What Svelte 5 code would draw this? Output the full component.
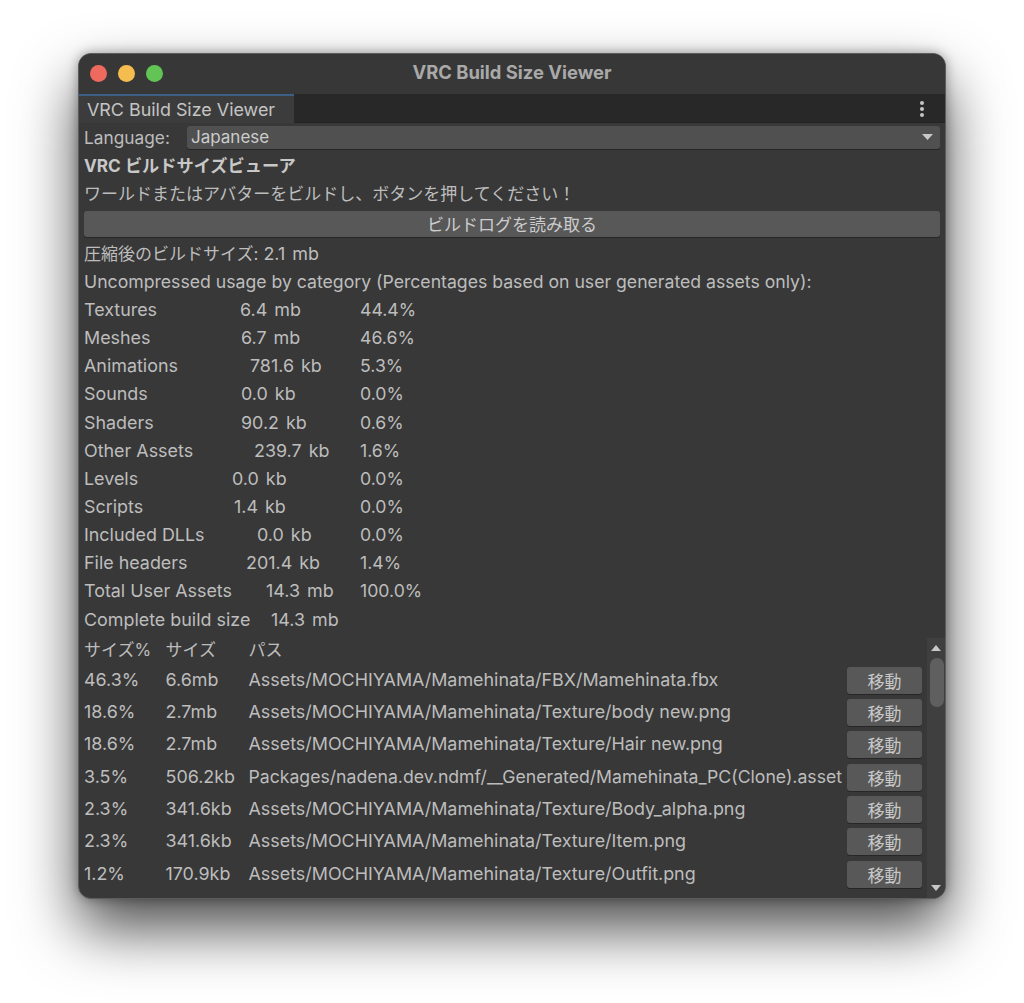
<script>
  const stats = [
    { name: "Textures", size: "6.4 mb", pct: "44.4%", at: 155 },
    { name: "Meshes", size: "6.7 mb", pct: "46.6%", at: 156 },
    { name: "Animations", size: "781.6 kb", pct: "5.3%", at: 165 },
    { name: "Sounds", size: "0.0 kb", pct: "0.0%", at: 156 },
    { name: "Shaders", size: "90.2 kb", pct: "0.6%", at: 156 },
    { name: "Other Assets", size: "239.7 kb", pct: "1.6%", at: 169 },
    { name: "Levels", size: "0.0 kb", pct: "0.0%", at: 147 },
    { name: "Scripts", size: "1.4 kb", pct: "0.0%", at: 149 },
    { name: "Included DLLs", size: "0.0 kb", pct: "0.0%", at: 172 },
    { name: "File headers", size: "201.4 kb", pct: "1.4%", at: 161 },
    { name: "Total User Assets", size: "14.3 mb", pct: "100.0%", at: 181 }
  ];

  const files = [
    ["46.3%", "6.6mb", "Assets/MOCHIYAMA/Mamehinata/FBX/Mamehinata.fbx"],
    ["18.6%", "2.7mb", "Assets/MOCHIYAMA/Mamehinata/Texture/body new.png"],
    ["18.6%", "2.7mb", "Assets/MOCHIYAMA/Mamehinata/Texture/Hair new.png"],
    ["3.5%", "506.2kb", "Packages/nadena.dev.ndmf/__Generated/Mamehinata_PC(Clone).asset"],
    ["2.3%", "341.6kb", "Assets/MOCHIYAMA/Mamehinata/Texture/Body_alpha.png"],
    ["2.3%", "341.6kb", "Assets/MOCHIYAMA/Mamehinata/Texture/Item.png"],
    ["1.2%", "170.9kb", "Assets/MOCHIYAMA/Mamehinata/Texture/Outfit.png"],
    ["0.5%", "74.5kb", "Packages/nadena.dev.ndmf/__Generated/Mamehinata.asset"]
  ];
</script>

<div class="page">
  <div class="window">
    <header class="titlebar">
      <div class="lights">
        <span class="light red"></span>
        <span class="light yellow"></span>
        <span class="light green"></span>
      </div>
      <div class="title">VRC Build Size Viewer</div>
    </header>

    <div class="tabbar">
      <div class="tab">VRC Build Size Viewer</div>
      <div class="kebab"><i></i><i></i><i></i></div>
    </div>

    <div class="content">
      <div class="lang">
        <span class="lang-label">Language:</span>
        <div class="select">
          <span>Japanese</span>
          <svg width="11" height="6" viewBox="0 0 11 6"><path d="M0 0h11L5.5 6z" fill="#c8c8c8" /></svg>
        </div>
      </div>
      <div class="line heading">VRC ビルドサイズビューア</div>
      <div class="line ja">ワールドまたはアバターをビルドし、ボタンを押してください！</div>
      <button class="read">ビルドログを読み取る</button>
      <div class="line"><span class="ja">圧縮後のビルドサイズ:</span> <span class="wide">2.1 mb</span></div>
      <div class="line usage">Uncompressed usage by category (Percentages based on user generated assets only):</div>

      {#each stats as s}
        <div class="line stat">
          <span class="stat-col" style="width: {s.at + 1}px">{s.name}</span>
          <span class="stat-col wide" style="width: {275 - s.at}px">{s.size}</span>
          <span class="stat-pct">{s.pct}</span>
        </div>
      {/each}
      <div class="line stat">
        <span class="stat-col" style="width: 187px">Complete build size</span>
        <span class="wide">14.3 mb</span>
      </div>

      <div class="list">
        <div class="rows">
          <div class="thead ja">
            <span class="c-pct">サイズ%</span>
            <span class="c-size">サイズ</span>
            <span>パス</span>
          </div>
          {#each files as f, i}
            <div class="row">
              <span class="c-pct">{f[0]}</span>
              <span class="c-size">{f[1]}</span>
              <span class="c-path" class:pkg={f[2].startsWith("Packages")}>{f[2]}</span>
              {#if i < files.length - 1}
                <button class="move">移動</button>
              {/if}
            </div>
          {/each}
        </div>
        <div class="scrollbar">
          <svg class="arrow" width="10" height="6" viewBox="0 0 10 6"><path d="M5 0l5 6H0z" fill="#c8c8c8" /></svg>
          <div class="track"><div class="thumb"></div></div>
          <svg class="arrow" width="10" height="6" viewBox="0 0 10 6"><path d="M0 0h10L5 6z" fill="#c8c8c8" /></svg>
        </div>
      </div>
    </div>
  </div>
</div>

<style>
  :global(body) {
    background: #fff;
  }
  .page {
    height: 1003px;
    box-sizing: border-box;
    padding: 53px 0 0 78px;
    overflow: hidden;
    font-family: Inter, "Noto Sans CJK JP", sans-serif;
    font-size: 17.9px;
    color: #bdbdbd;
  }
  .ja {
    font-size: 17px;
  }
  .wide {
    word-spacing: 2px;
  }
  .window {
    width: 868px;
    height: 846px;
    box-sizing: border-box;
    border: 1px solid #5c5c5c;
    border-radius: 13px;
    background: #383838;
    box-shadow: 0 30px 60px rgba(0, 0, 0, 0.7), 0 0 12px rgba(0, 0, 0, 0.35);
    overflow: hidden;
    display: flex;
    flex-direction: column;
  }
  .titlebar {
    height: 40px;
    flex: none;
    background: #373737;
    display: flex;
    align-items: center;
    position: relative;
  }
  .lights {
    display: flex;
    gap: 11px;
    margin: -2px 0 0 11px;
  }
  .light {
    width: 17px;
    height: 17px;
    border-radius: 50%;
  }
  .red { background: #ee6a5f; }
  .yellow { background: #f5bd4f; }
  .green { background: #61c454; }
  .title {
    position: absolute;
    inset: 0 0 5px 0;
    display: flex;
    align-items: center;
    justify-content: center;
    font-size: 18.4px;
    font-weight: 700;
    color: #a9a9a9;
  }
  .tabbar {
    height: 29px;
    flex: none;
    background: #282828;
    display: flex;
    align-items: stretch;
    justify-content: space-between;
    box-shadow: inset 0 -1px 0 #232323;
  }
  .tab {
    width: 215px;
    box-sizing: border-box;
    border-top: 2px solid #3d5f85;
    background: #3c3c3c;
    padding-left: 8px;
    line-height: 27px;
    color: #c4c4c4;
  }
  .kebab {
    width: 46px;
    display: flex;
    flex-direction: column;
    align-items: center;
    justify-content: center;
    gap: 2px;
  }
  .kebab i {
    width: 4px;
    height: 4px;
    border-radius: 50%;
    background: #c4c4c4;
  }
  .content {
    flex: 1;
    min-height: 0;
    display: flex;
    flex-direction: column;
    padding-left: 5px;
  }
  .lang {
    display: flex;
    align-items: center;
    height: 29px;
    padding-right: 5px;
    flex: none;
  }
  .lang-label {
    width: 103px;
    flex: none;
    font-size: 17.3px;
    margin-top: -1px;
  }
  .select {
    flex: 1;
    height: 23px;
    box-sizing: border-box;
    background: #505050;
    border-radius: 3px;
    box-shadow: 0 1px 0 #262626;
    display: flex;
    align-items: center;
    justify-content: space-between;
    padding: 0 7px 1px 4px;
    font-size: 17px;
    color: #cccccc;
  }
  .line {
    height: 28.15px;
    line-height: 28.15px;
    flex: none;
    white-space: nowrap;
  }
  .usage {
    font-size: 17.65px;
  }
  .heading {
    font-size: 17.2px;
    font-weight: 700;
    color: #c8c8c8;
  }
  .read {
    flex: none;
    height: 26px;
    margin: 3px 5px 2.4px 0;
    padding: 0 0 2px;
    border: 0;
    border-radius: 3px;
    background: #585858;
    box-shadow: 0 1px 0 #262626;
    color: #cccccc;
    font-family: inherit;
    font-size: 17px;
  }
  .stat {
    display: flex;
  }
  .stat-col {
    display: block;
    flex: none;
  }
  .stat-pct {
    font-size: 17.7px;
  }
  .list {
    flex: 1;
    min-height: 0;
    display: flex;
    overflow: hidden;
  }
  .rows {
    flex: 1;
    min-width: 0;
    overflow: hidden;
  }
  .thead {
    height: 29.6px;
    line-height: 25px;
    display: flex;
    align-items: flex-end;
    white-space: nowrap;
  }
  .row {
    height: 32.3px;
    display: flex;
    align-items: center;
    white-space: nowrap;
  }
  .c-pct {
    width: 81.5px;
    flex: none;
  }
  .c-size {
    width: 83px;
    flex: none;
  }
  .c-path {
    flex: 1;
    min-width: 0;
  }
  .pkg {
    font-size: 17.65px;
  }
  .move {
    flex: none;
    width: 75px;
    height: 27px;
    margin: 2px 5px 0 0;
    padding: 0;
    border: 0;
    border-radius: 3px;
    background: #585858;
    box-shadow: 0 1px 0 #262626;
    color: #c8c8c8;
    font-family: inherit;
    font-size: 17px;
  }
  .scrollbar {
    width: 18px;
    flex: none;
    margin-top: 4px;
    background: #3f3f3f;
    display: flex;
    flex-direction: column;
    align-items: center;
    padding: 7px 0 7px;
    box-sizing: border-box;
  }
  .arrow {
    flex: none;
  }
  .track {
    flex: 1;
    width: 100%;
    padding-top: 7px;
  }
  .thumb {
    width: 14px;
    height: 49px;
    margin-left: 3px;
    border-radius: 7px;
    background: #5f5f5f;
  }
</style>
